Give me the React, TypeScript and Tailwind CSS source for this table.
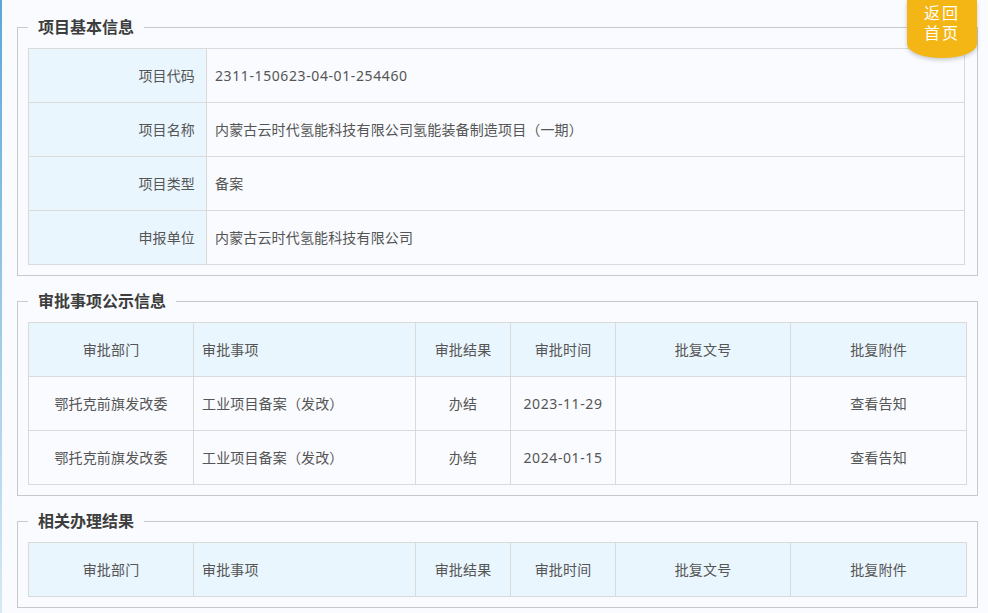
import React from "react";

const basicInfo = [
  { label: "项目代码", value: "2311-150623-04-01-254460" },
  { label: "项目名称", value: "内蒙古云时代氢能科技有限公司氢能装备制造项目（一期）" },
  { label: "项目类型", value: "备案" },
  { label: "申报单位", value: "内蒙古云时代氢能科技有限公司" },
];

const columns = [
  { title: "审批部门", width: 165, left: false },
  { title: "审批事项", width: 222, left: true },
  { title: "审批结果", width: 95, left: false },
  { title: "审批时间", width: 105, left: false },
  { title: "批复文号", width: 175, left: false },
  { title: "批复附件", width: 176, left: false },
];

const approvals = [
  ["鄂托克前旗发改委", "工业项目备案（发改）", "办结", "2023-11-29", "", "查看告知"],
  ["鄂托克前旗发改委", "工业项目备案（发改）", "办结", "2024-01-15", "", "查看告知"],
];

// digits/dashes get a little extra spacing so numbers run as wide as the reference
function Text({ value }: { value: string }) {
  if (!/[0-9]/.test(value)) return <>{value}</>;
  return <span className="tracking-[0.6px]">{value}</span>;
}

function Section({ title, className = "", children }: { title: string; className?: string; children: React.ReactNode }) {
  return (
    <fieldset className={`border border-[#c9c9c9] px-[10px] pb-[10px] pt-[10px] ${className}`}>
      <legend className="px-[10px] text-[16px] leading-[22px] font-bold tracking-normal text-[#3d3d3d]">{title}</legend>
      {children}
    </fieldset>
  );
}

function ApprovalTable({ rows }: { rows: string[][] }) {
  return (
    <table className="w-[937px] table-fixed border-collapse text-[14px] text-[#555]">
      <colgroup>
        {columns.map((c) => (
          <col key={c.title} style={{ width: c.width }} />
        ))}
      </colgroup>
      <thead>
        <tr className="h-[54px] bg-[#eaf6fe]">
          {columns.map((c) => (
            <th
              key={c.title}
              className={`border border-[#dadada] font-normal ${c.left ? "text-left pl-[8px]" : "text-center"}`}
            >
              {c.title}
            </th>
          ))}
        </tr>
      </thead>
      <tbody>
        {rows.map((r, i) => (
          <tr key={i} className="h-[54px]">
            {r.map((cell, j) => (
              <td
                key={j}
                className={`border border-[#dadada] ${columns[j].left ? "text-left pl-[8px]" : "text-center"}`}
              >
                <Text value={cell} />
              </td>
            ))}
          </tr>
        ))}
      </tbody>
    </table>
  );
}

export default function App() {
  return (
    <div
      className="relative flex h-[613px] w-[988px] overflow-hidden bg-[#f9fbfe] tracking-[0.15px]"
      style={{ fontFamily: '"Noto Sans", "Noto Sans CJK SC", sans-serif' }}
    >
      <div className="w-[2px] shrink-0 bg-gradient-to-b from-[#5ba7d7] to-[#d6e9f4]" />

      <div className="ml-[15px] w-[961px] pt-[16px]">
        <Section title="项目基本信息">
          <table className="w-[937px] table-fixed border-collapse text-[14px] text-[#555]">
            <colgroup>
              <col style={{ width: 178 }} />
              <col />
            </colgroup>
            <tbody>
              {basicInfo.map((row) => (
                <tr key={row.label} className="h-[54px]">
                  <td className="border border-[#dadada] bg-[#eaf6fe] pr-[11px] text-right">{row.label}</td>
                  <td className="border border-[#dadada] pl-[8px]">
                    <Text value={row.value} />
                  </td>
                </tr>
              ))}
            </tbody>
          </table>
        </Section>

        <Section title="审批事项公示信息" className="mt-[14px]">
          <ApprovalTable rows={approvals} />
        </Section>

        <Section title="相关办理结果" className="mt-[14px]">
          <ApprovalTable rows={[]} />
        </Section>
      </div>

      <div className="absolute right-[11px] top-0 flex h-[58px] w-[70px] flex-col items-center rounded-b-[35px_14px] bg-[#f4b615] pt-[3px] text-[16px] leading-[20px] tracking-[2px] text-white shadow-[0_2px_4px_rgba(0,0,0,0.2)]">
        <span>返回</span>
        <span>首页</span>
      </div>
    </div>
  );
}
